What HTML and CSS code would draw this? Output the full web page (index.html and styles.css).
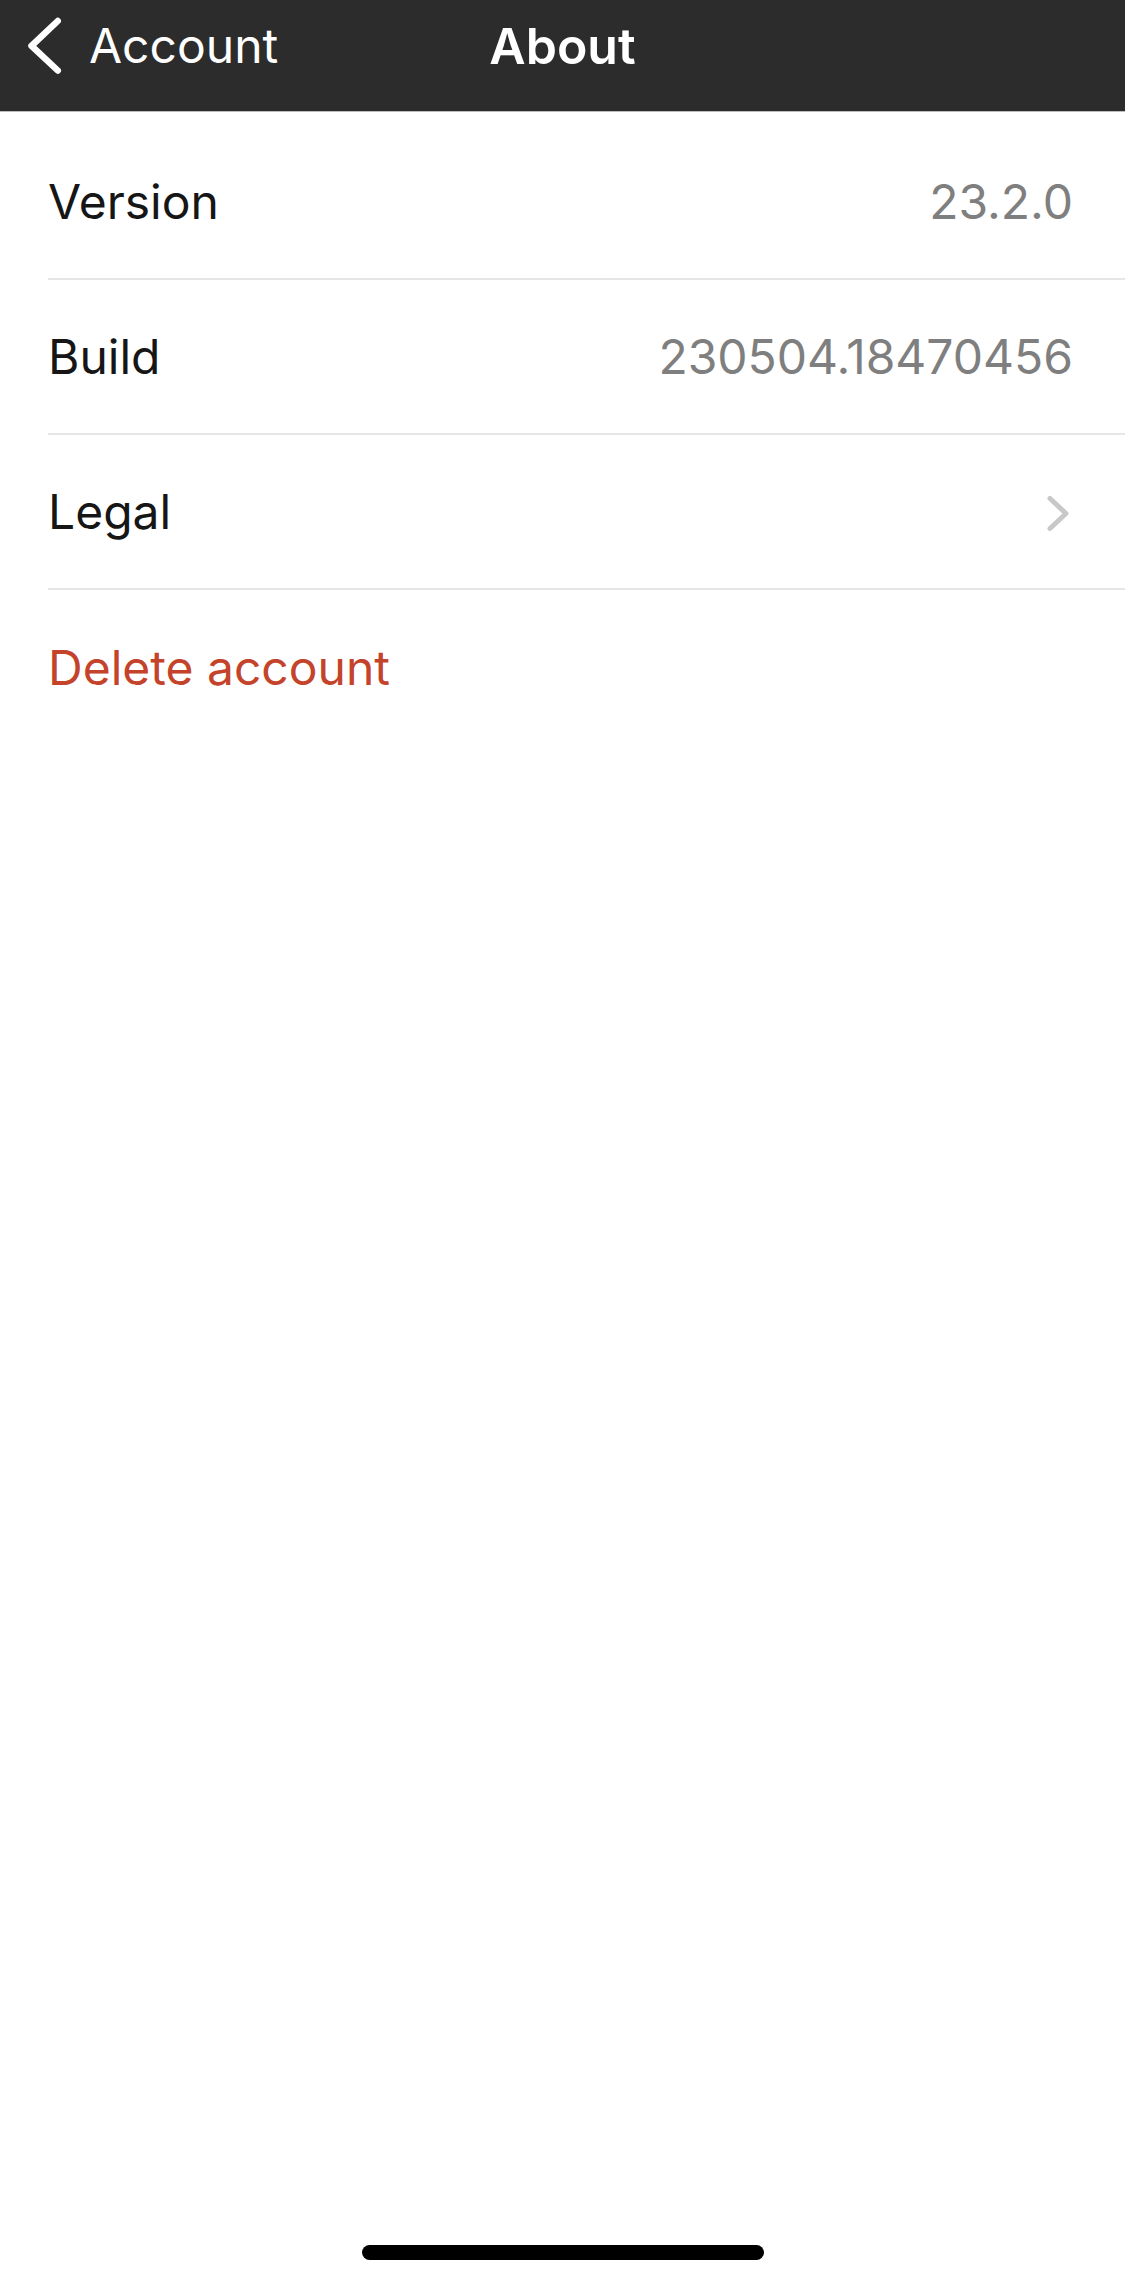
FILE: index.html
```html
<!DOCTYPE html>
<html lang="en">
<head>
<meta charset="utf-8">
<title>About</title>
<link rel="stylesheet" href="styles.css">
</head>
<body>
<div class="screen">
  <header class="navbar">
    <div class="nav-row">
      <a class="back" href="#">
        <svg class="back-icon" width="40" height="60" viewBox="0 0 40 60" aria-hidden="true">
          <polyline points="33.75,5 7.5,29.8 33.75,54.5" fill="none" stroke="#ffffff" stroke-width="6.5" stroke-linecap="round" stroke-linejoin="round"/>
        </svg>
        <span class="back-label">Account</span>
      </a>
      <h1 class="title">About</h1>
      <div class="nav-spacer"></div>
    </div>
  </header>

  <main class="content">
    <ul class="list">
      <li class="row">
        <span class="label">Version</span>
        <span class="value">23.2.0</span>
      </li>
      <li class="row">
        <span class="label">Build</span>
        <span class="value">230504.18470456</span>
      </li>
      <li class="row">
        <span class="label">Legal</span>
        <svg class="disclosure" width="28" height="40" viewBox="0 0 28 40" aria-hidden="true">
          <polyline points="5,6.5 21,21.5 5,36.5" fill="none" stroke="#c8c8c8" stroke-width="5" stroke-linecap="round" stroke-linejoin="round"/>
        </svg>
      </li>
      <li class="row row-plain">
        <span class="label danger">Delete account</span>
      </li>
    </ul>
  </main>

  <footer class="home-area">
    <div class="home-indicator"></div>
  </footer>
</div>
</body>
</html>
```

FILE: styles.css
```css
* {
  box-sizing: border-box;
}

html, body {
  margin: 0;
  padding: 0;
  background: #ffffff;
}

body {
  font-family: "Inter", "Noto Sans", "Liberation Sans", sans-serif;
  -webkit-font-smoothing: antialiased;
}

.screen {
  min-height: 100vh;
  display: flex;
  flex-direction: column;
}

.navbar {
  background: #2c2c2c;
  height: 112px;
  border-bottom: 1px solid #bdbdbd;
  padding-bottom: 20px;
}

.nav-row {
  height: 91px;
  display: grid;
  grid-template-columns: 1fr auto 1fr;
  align-items: center;
}

.back {
  display: flex;
  align-items: center;
  gap: 25px;
  padding-left: 24px;
  color: #ffffff;
  text-decoration: none;
}

.back-icon {
  display: block;
  flex: none;
}

.back-label {
  font-size: 48px;
  line-height: 1;
  font-weight: 400;
  color: #ffffff;
}

.title {
  margin: 0;
  font-size: 50px;
  line-height: 1;
  font-weight: 600;
  color: #ffffff;
}

.content {
  flex: 1;
}

.list {
  list-style: none;
  margin: 0;
  padding: 13px 0 0 48px;
}

.row {
  height: 155px;
  display: flex;
  align-items: center;
  justify-content: space-between;
  padding-right: 52px;
  border-bottom: 2px solid #e6e6e6;
}

.row-plain {
  border-bottom: none;
}

.label {
  font-size: 48px;
  line-height: 1;
  color: #161616;
}

.value {
  font-size: 48px;
  line-height: 1;
  color: #7f7f7f;
}

.danger {
  color: #c4432b;
}

.disclosure {
  display: block;
  flex: none;
}

.home-area {
  display: flex;
  justify-content: center;
  padding-bottom: 24px;
}

.home-indicator {
  width: 402px;
  height: 15px;
  border-radius: 8px;
  background: #000000;
}
```
